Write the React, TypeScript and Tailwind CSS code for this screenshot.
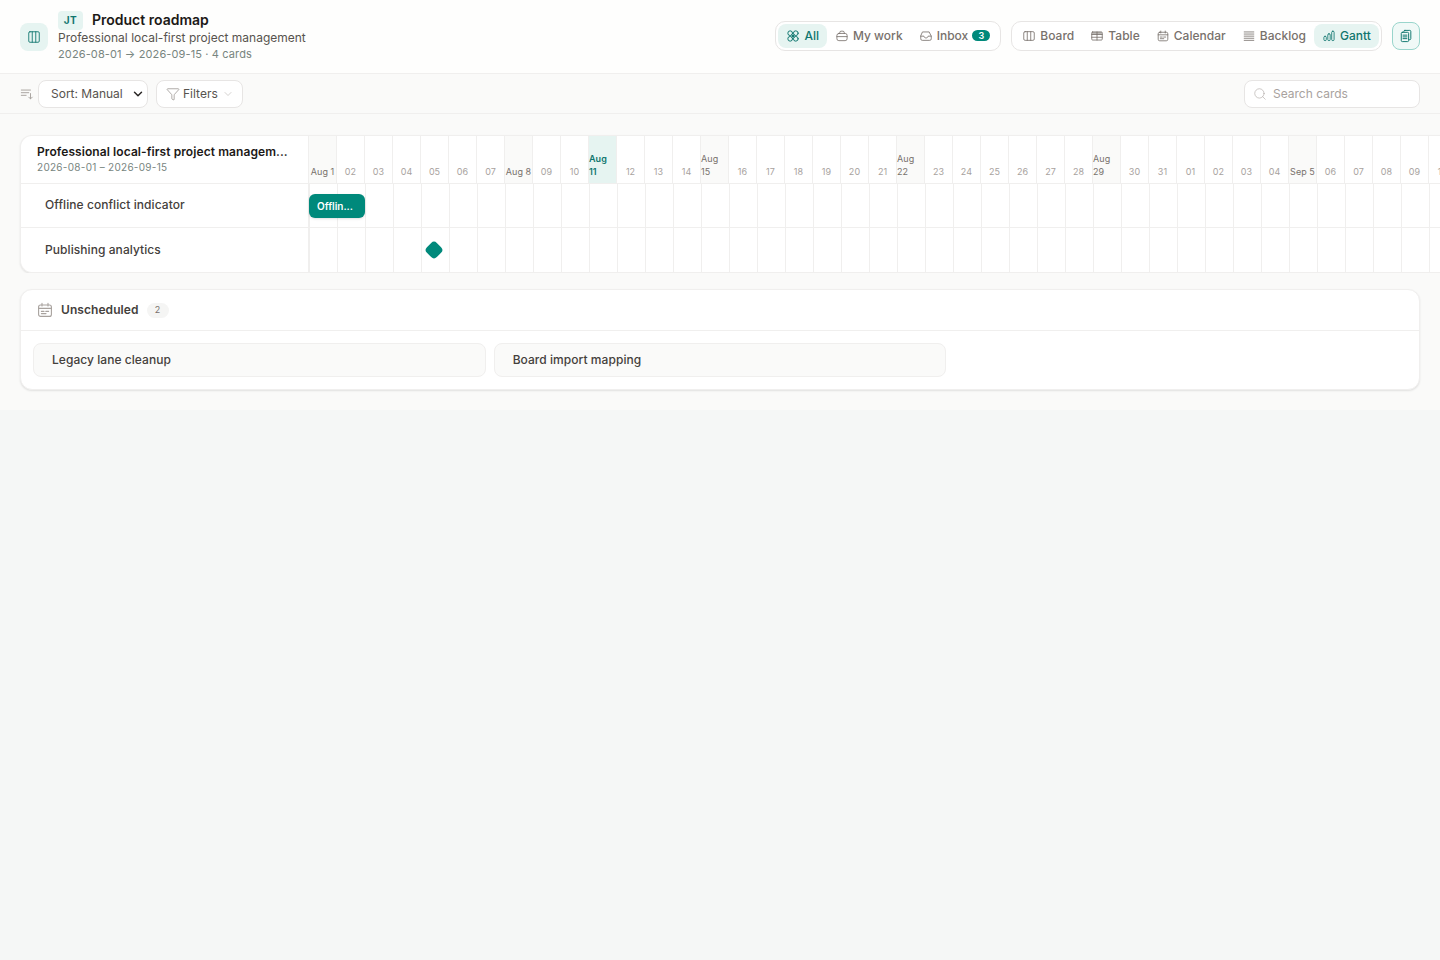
import React from "react";
import { Columns3, ChevronDown, Search, Funnel } from "lucide-react";

const S = ({ children, className = "w-3 h-3" }: { children: React.ReactNode; className?: string }) => (
  <svg viewBox="0 0 16 16" fill="none" stroke="currentColor" strokeWidth="1.1" strokeLinecap="round" strokeLinejoin="round" className={`shrink-0 ${className}`}>{children}</svg>
);
const AllIcon = () => (
  <S className="w-[14px] h-[14px] -mx-px">
    <circle cx="4.8" cy="4.8" r="2.7" />
    <circle cx="11.2" cy="4.8" r="2.7" />
    <circle cx="4.8" cy="11.2" r="2.7" />
    <circle cx="11.2" cy="11.2" r="2.7" />
    <path d="M6.6 6.6 L9.4 9.4 M9.4 6.6 L6.6 9.4" />
  </S>
);
const BagIcon = () => (<S><rect x="1.2" y="4.6" width="13.6" height="9.6" rx="2.6" /><path d="M5 4.6 V3.4 A1.8 1.8 0 0 1 6.8 1.6 H9.2 A1.8 1.8 0 0 1 11 3.4 V4.6 M1.2 8.8 H14.8" /></S>);
const InboxIcon = () => (<S><path d="M3.8 2.6 H12.2 L15 8.2 V11.8 A2 2 0 0 1 13 13.8 H3 A2 2 0 0 1 1 11.8 V8.2 Z M1 8.2 H5.2 C5.5 9.8 6.6 10.6 8 10.6 C9.4 10.6 10.5 9.8 10.8 8.2 H15" /></S>);
const BoardIcon = () => (<S><rect x="1" y="2.2" width="14" height="11.6" rx="1.8" /><path d="M5.7 2.2 V13.8 M10.3 2.2 V13.8" /></S>);
const TableIcon = () => (<S><path d="M1.6 2.6 H14.4 V6 H1.6 Z" fill="currentColor" opacity=".5" stroke="none" /><rect x="1" y="2.6" width="14" height="10.8" rx="1.2" /><path d="M1 6 H15 M1 9.7 H15 M8 2.6 V13.4" /></S>);
const CalIcon = ({ className }: { className?: string }) => (<S className={className}><rect x="1.6" y="3" width="12.8" height="11.4" rx="2" /><path d="M1.6 6.4 H14.4 M5 1.4 V4 M11 1.4 V4 M4.4 9.4 H7 M8.8 9.4 H11.6 M4.4 11.6 H9" /></S>);
const BacklogIcon = () => (<S><path d="M1.6 2.6 H14.4 M1.6 5.4 H14.4 M1.6 8.2 H14.4 M1.6 11 H14.4 M1.6 13.8 H14.4" /></S>);
const GanttIcon = () => (<S><rect x="1.2" y="8.4" width="3.2" height="5.8" rx="1.5" /><rect x="6.4" y="5" width="3.2" height="9.2" rx="1.5" /><rect x="11.6" y="1.6" width="3.2" height="12.6" rx="1.5" /></S>);
const CopyIcon = () => (<S className="w-3.5 h-3.5"><rect x="5.5" y="1.6" width="8" height="10.6" rx="1.2" /><rect x="2.6" y="3.8" width="8.4" height="10.6" rx="1.2" fill="#f0f9f7" /><path d="M4.6 7 H9 M4.6 9 H9 M4.6 11 H9" /></S>);
const SortIcon = () => (<S className="w-3.5 h-3.5"><path d="M1.5 3.5 H12 M1.5 6.5 H10 M1.5 9.5 H7 M12 7.5 V13.5 M10 11.6 L12 13.6 L14 11.6" /></S>);

type Seg = { l: string; i: React.ReactNode; on?: boolean; badge?: string };
const segLeft: Seg[] = [
  { l: "All", i: <AllIcon />, on: true },
  { l: "My work", i: <BagIcon /> },
  { l: "Inbox", i: <InboxIcon />, badge: "3" },
];
const segRight: Seg[] = [
  { l: "Board", i: <BoardIcon /> },
  { l: "Table", i: <TableIcon /> },
  { l: "Calendar", i: <CalIcon /> },
  { l: "Backlog", i: <BacklogIcon /> },
  { l: "Gantt", i: <GanttIcon />, on: true },
];

const Segments = ({ items, className = "" }: { items: Seg[]; className?: string }) => (
  <div className={`flex items-center h-[30px] rounded-[10px] border border-[#e7e5e4] bg-white px-[2px] ${className}`}>
    {items.map((s) => (
      <div key={s.l} className={`flex items-center gap-[5px] h-6 pl-[9px] pr-2 rounded-lg text-xs font-medium leading-none ${s.on ? "bg-[#e6f4f1] text-[#0f766e]" : "text-[#78716c]"}`}>
        {s.i}
        <span>{s.l}</span>
        {s.badge && <span className="-ml-px flex items-center justify-center w-[18px] h-[11px] rounded-full bg-[#00897b] text-white text-[9px] font-semibold">{s.badge}</span>}
      </div>
    ))}
  </div>
);

const days = [
  "Aug 1","02","03","04","05","06","07","Aug 8","09","10","Aug 11","12","13","14","Aug 15","16","17","18","19","20","21","Aug 22","23","24","25","26","27","28","Aug 29","30","31","01","02","03","04","Sep 5","06","07","08","09","10","11",
];

const HeadCell = ({ d }: { d: string }) => {
  const today = d === "Aug 11";
  const major = d.length > 2;
  return (
    <div className={`w-7 shrink-0 h-full border-r border-[#f0efee] flex items-end justify-center pb-[5px] text-[9px] leading-[13px] tracking-[0.05px] ${today ? "bg-[#e6f4f1] text-[#0f766e] font-semibold" : major ? "bg-[#fafaf9] text-[#78716c]" : "text-[#a8a29e]"}`}>
      <span>{d}</span>
    </div>
  );
};

const Row = ({ title, children, last }: { title: string; children?: React.ReactNode; last?: boolean }) => (
  <div className={`flex h-11 ${last ? "" : "border-b border-[#f0efee]"}`}>
    <div className={`w-[289px] shrink-0 flex items-center pl-6 text-xs font-medium tracking-[0.07px] text-[#44403c] border-r-2 border-[#f0efee] ${last ? "" : "pb-[2px]"}`}>{title}</div>
    <div className="relative flex">
      {days.map((d, i) => (<div key={i} className="w-7 shrink-0 border-r border-[#f0efee]" />))}
      {children}
    </div>
  </div>
);

export default function App() {
  return (
    <div className="min-h-[960px] bg-[#f5f7f6] text-[#1c1917] [font-family:Inter,'Liberation_Sans',sans-serif]">
      <div className="bg-[#fafaf9] overflow-hidden pb-5">
        <header className="h-[74px] bg-[#fefefd] border-b border-[#f0efee] flex items-center pl-5 pr-5">
          <div className="w-7 h-7 rounded-lg bg-[#e6f4f1] text-[#0f766e] flex items-center justify-center mr-[10px]"><Columns3 className="w-3.5 h-3.5" strokeWidth={1.5} /></div>
          <div className="flex flex-col">
            <div className="flex items-center gap-[9px] h-[19px]">
              <span className="h-[19px] w-[25px] flex items-center justify-center rounded bg-[#e6f4f1] text-[#0f766e] text-[10px] font-bold tracking-wider">JT</span>
              <span className="text-sm font-semibold leading-none pb-[2px]">Product roadmap</span>
            </div>
            <div className="text-xs text-[#57534e] leading-4">Professional local-first project management</div>
            <div className="text-[11px] text-[#78857f] leading-4 tracking-[0.12px]">2026-08-01 → 2026-09-15 · 4 cards</div>
          </div>
          <div className="ml-auto mb-[2px] flex items-center gap-[10px]">
            <Segments items={segLeft} />
            <Segments items={segRight} className="tracking-[0.03px]" />
            <button className="w-7 h-7 rounded-lg border border-[#99d5cc] bg-[#f0f9f7] text-[#0f766e] flex items-center justify-center"><CopyIcon /></button>
          </div>
        </header>
        <div className="h-10 flex items-center px-5 border-b border-[#f0efee]">
          <span className="text-[#a8a29e] mr-1"><SortIcon /></span>
          <div className="h-7 w-[110px] rounded-lg border border-[#e7e5e4] bg-white flex items-center justify-between pl-3 pr-[2px] text-xs text-[#57534e]">
            Sort: Manual
            <ChevronDown className="w-3.5 h-3.5 text-[#292524]" strokeWidth={2.5} />
          </div>
          <div className="h-7 ml-2 w-[87px] rounded-lg border border-[#e7e5e4] bg-white flex items-center pl-[9px] gap-[3px] text-xs text-[#57534e]">
            <Funnel className="w-3.5 h-3.5 text-[#78716c]" strokeWidth={1} />
            Filters
            <ChevronDown className="w-3 h-3 text-[#a8a29e] ml-px" strokeWidth={1} />
          </div>
          <div className="ml-auto h-7 w-[176px] rounded-lg border border-[#e7e5e4] bg-white flex items-center pl-2 gap-[6px] text-xs text-[#a8a29e]">
            <Search className="w-3.5 h-3.5" strokeWidth={1} />
            Search cards
          </div>
        </div>

        <div className="pl-5 pt-[21px] overflow-hidden">
          <div className="w-max bg-white rounded-l-xl border border-[#f0efee] border-r-0 shadow-[0_1px_2px_rgba(0,0,0,0.1)]">
            <div className="flex h-12 border-b border-[#f0efee]">
              <div className="w-[288px] shrink-0 pl-4 flex flex-col justify-center border-r border-[#f0efee]">
                <div className="text-xs font-semibold leading-4 tracking-[0.08px] text-[#1c1917] whitespace-nowrap">Professional local-first project managem...</div>
                <div className="text-[10px] leading-[15px] tracking-[0.28px] text-[#78857f]">2026-08-01 – 2026-09-15</div>
              </div>
              <div className="flex">
                {days.map((d, i) => (<HeadCell key={i} d={d} />))}
              </div>
            </div>
            <Row title="Offline conflict indicator">
              <div className="absolute left-[-1px] top-[10px] w-14 h-6 rounded-md bg-[#00897b] text-white text-[10px] font-semibold flex items-center pl-2 shadow-sm">Offlin...</div>
            </Row>
            <Row title="Publishing analytics" last>
              <div className="absolute left-[117px] top-[15px] w-[14px] h-[14px] rotate-45 rounded-sm bg-[#00897b]" />
            </Row>
          </div>
        </div>

        <div className="mx-5 mt-4 bg-white rounded-xl border border-[#f0efee] shadow-[0_1px_2px_rgba(0,0,0,0.1)]">
          <div className="h-[41px] flex items-center pl-4 gap-2 border-b border-[#f0efee]">
            <span className="text-[#a8a29e]"><CalIcon className="w-4 h-4" /></span>
            <span className="text-xs font-semibold tracking-[0.07px] text-[#44403c]">Unscheduled</span>
            <span className="w-[22px] h-[15px] rounded-full bg-[#f5f5f4] text-[9px] text-[#78716c] flex items-center justify-center">2</span>
          </div>
          <div className="grid grid-cols-3 gap-2 p-3">
            {["Legacy lane cleanup", "Board import mapping"].map((t) => (
              <div key={t} className="h-[34px] rounded-lg border border-[#f0efee] bg-[#fafaf9] flex items-center pl-[18px] text-xs font-medium tracking-[0.05px] text-[#44403c]">{t}</div>
            ))}
          </div>
        </div>
      </div>
    </div>
  );
}
